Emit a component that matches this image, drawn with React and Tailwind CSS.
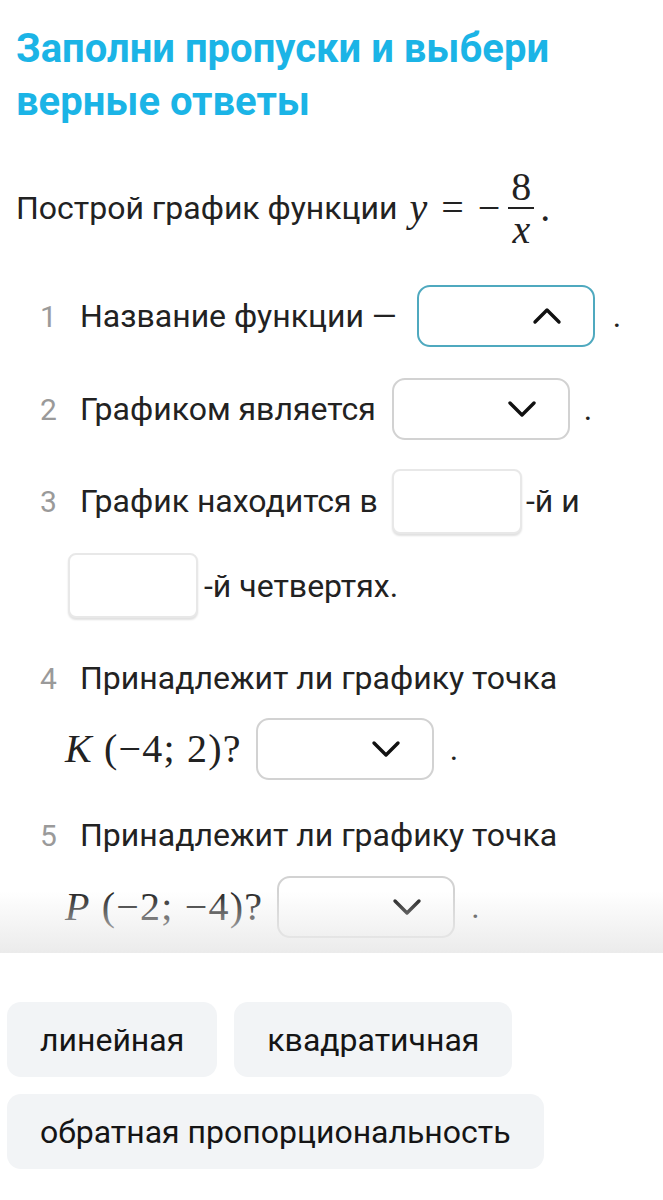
import React from 'react';

const font = { fontFamily: 'Roboto, "Noto Sans", sans-serif' };
const serif = { fontFamily: '"Liberation Serif", "DejaVu Serif", serif' };

function Chevron({ up }) {
  return (
    <svg width="30" height="18" viewBox="0 0 30 18" className="shrink-0">
      <path
        d={up ? 'M3 15 L15 3 L27 15' : 'M3 3 L15 15 L27 3'}
        fill="none"
        stroke="#111"
        strokeWidth="3.4"
        strokeLinecap="round"
        strokeLinejoin="round"
      />
    </svg>
  );
}

function Select({ open }) {
  return (
    <div
      className={`w-[178px] h-[62px] rounded-[13px] border-2 bg-white flex items-center justify-end pr-[31px] shrink-0 ${
        open ? 'border-[#4fa9bf]' : 'border-[#d2d2d2]'
      }`}
    >
      <Chevron up={open} />
    </div>
  );
}

function Blank() {
  return (
    <div className="w-[130px] h-[65px] rounded-[8px] border-2 border-[#e8e8e8] bg-white shadow-[0_2px_2px_rgba(0,0,0,0.12)] shrink-0" />
  );
}

function Num({ n }) {
  return <span className="w-[80px] pl-[40px] text-[#9a9a9a] text-[30px] shrink-0">{n}</span>;
}

function Math({ children }) {
  return (
    <span className="text-[40px] tracking-[1.2px] text-[#222]" style={serif}>
      {children}
    </span>
  );
}

export default function App() {
  return (
    <div className="w-[663px] min-h-[1200px] bg-white text-[#222]" style={font}>
      <div className="px-4">
        <h1 className="pt-[22px] text-[40px] leading-[53px] font-bold text-[#1bb4e6]">
          Заполни пропуски и выбери
          <br />
          верные ответы
        </h1>

        <div className="mt-[37px] h-[86px] flex items-center text-[32px]">
          <span>Построй график функции</span>
          <span className="ml-[12px] flex items-center text-[40px]" style={serif}>
            <i>y</i>
            <span className="ml-[14px]">=</span>
            <span className="ml-[14px]">−</span>
            <span className="ml-[8px] inline-flex flex-col items-center leading-[41px]">
              <span>8</span>
              <span className="w-[26px] h-[2px] bg-[#222]" />
              <i>x</i>
            </span>
            <span className="ml-[6px]">.</span>
          </span>
        </div>

        <div className="text-[32px] -ml-4">
          <div className="mt-[34px] h-[62px] flex items-center">
            <Num n="1" />
            <span>Название функции —</span>
            <span className="ml-[20px]">
              <Select open />
            </span>
            <span className="ml-[18px]">.</span>
          </div>

          <div className="mt-[31px] h-[62px] flex items-center">
            <Num n="2" />
            <span>Графиком является</span>
            <span className="ml-[16px]">
              <Select />
            </span>
            <span className="ml-[14px]">.</span>
          </div>

          <div className="mt-[28px] h-[66px] flex items-center">
            <Num n="3" />
            <span>График находится в</span>
            <span className="ml-[14px]">
              <Blank />
            </span>
            <span className="ml-[4px]">-й и</span>
          </div>
          <div className="mt-[19px] h-[65px] flex items-center pl-[68px]">
            <Blank />
            <span className="ml-[6px]">-й четвертях.</span>
          </div>

          <div className="mt-[38px] h-[44px] flex items-center">
            <Num n="4" />
            <span>Принадлежит ли графику точка</span>
          </div>
          <div className="mt-[18px] h-[62px] flex items-center pl-[65px]">
            <Math>
              <i>K</i> (−4; 2)?
            </Math>
            <span className="ml-[14px]">
              <Select />
            </span>
            <span className="ml-[16px]">.</span>
          </div>

          <div className="mt-[33px] h-[44px] flex items-center">
            <Num n="5" />
            <span>Принадлежит ли графику точка</span>
          </div>
          <div className="mt-[19px] h-[62px] flex items-center pl-[65px]">
            <Math>
              <i>P</i> (−2; −4)?
            </Math>
            <span className="ml-[14px]">
              <Select />
            </span>
            <span className="ml-[16px]">.</span>
          </div>
        </div>
      </div>

      <div className="relative mt-[15px] bg-white pt-[49px] px-[7px] pb-[30px]">
        <div className="absolute bottom-full left-0 right-0 h-[62px] bg-gradient-to-b from-white/0 to-[#ebebeb]" />
        <div className="flex flex-wrap gap-[17px] text-[32px] text-[#151515]">
          <div className="h-[75px] px-[33px] rounded-[14px] bg-[#f2f4f6] flex items-center">линейная</div>
          <div className="h-[75px] px-[33px] rounded-[14px] bg-[#f2f4f6] flex items-center">квадратичная</div>
          <div className="h-[75px] px-[33px] rounded-[14px] bg-[#f2f4f6] flex items-center">
            обратная пропорциональность
          </div>
        </div>
      </div>
    </div>
  );
}
